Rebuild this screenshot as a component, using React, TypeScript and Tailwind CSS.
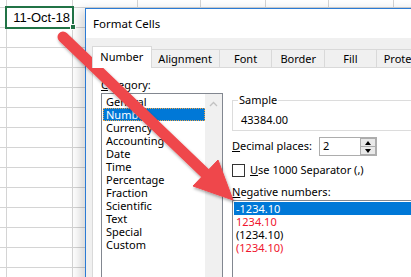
import React from "react";

const COLS = [7, 66, 65, 63, 65, 63, 65, 40];
const ROWS = [8, ...Array.from({ length: 14 }, () => 20)];

const CATEGORIES = [
  "General",
  "Number",
  "Currency",
  "Accounting",
  "Date",
  "Time",
  "Percentage",
  "Fraction",
  "Scientific",
  "Text",
  "Special",
  "Custom",
];

const NEGATIVES = [
  { label: "-1234.10", red: false },
  { label: "1234.10", red: true },
  { label: "(1234.10)", red: false },
  { label: "(1234.10)", red: true },
];

const TABS = [
  { label: "Number", w: "w-[61px]" },
  { label: "Alignment", w: "w-[70px]" },
  { label: "Font", w: "w-[54px]" },
  { label: "Border", w: "w-[54px]" },
  { label: "Fill", w: "w-[53px]" },
  { label: "Protection", w: "w-[70px]" },
];

function Sheet() {
  return (
    <div className="flex flex-col">
      {ROWS.map((h, r) => (
        <div key={r} className="flex" style={{ height: h }}>
          {COLS.map((w, c) => (
            <div
              key={c}
              className="shrink-0 border-r border-b border-[#d4d4d4]"
              style={{ width: w }}
            />
          ))}
        </div>
      ))}
    </div>
  );
}

function Arrow() {
  return (
    <svg
      className="absolute inset-0 pointer-events-none"
      width="411"
      height="277"
      viewBox="0 0 411 277"
    >
      <defs>
        <filter id="sh" x="-20%" y="-20%" width="140%" height="140%">
          <feDropShadow dx="1" dy="2" stdDeviation="1.5" floodColor="#000" floodOpacity="0.35" />
        </filter>
      </defs>
      <g filter="url(#sh)" fill="#ef464b" stroke="#ef464b">
        <line x1="63" y1="37" x2="208" y2="176" strokeWidth="11" strokeLinecap="round" />
        <polygon points="233,200 218,160 193,186" strokeWidth="1" strokeLinejoin="round" />
      </g>
    </svg>
  );
}

export default function App() {
  return (
    <div className="relative w-[411px] h-[277px] overflow-hidden bg-white">
      <Sheet />

      {/* Selected cell */}
      <div className="absolute left-[5px] top-[6px] w-[69px] h-[23px] border-2 border-[#217346] flex items-center justify-end pr-[2px] font-['Liberation_Sans',sans-serif] text-[13px] text-black">
        11-Oct-18
      </div>
      <div className="absolute left-[70px] top-[24px] w-[6px] h-[6px] bg-[#217346] border border-white" />

      {/* Format Cells dialog */}
      <div className="absolute left-[85px] top-[8px] w-[360px] h-[300px] border-l border-t border-[#2b7bd4] bg-[#f0f0f0] shadow-[-5px_2px_10px_rgba(0,0,0,0.16)] font-['Noto_Sans',sans-serif] text-[11px] text-black flex flex-col">
        <div className="h-[29px] bg-white flex items-center pl-[7px] text-[11.5px]">
          Format Cells
        </div>

        <div className="pl-[6px] pt-[8px] flex flex-col">
          {/* Tabs */}
          <div className="flex items-end h-[21px]">
            {TABS.map((t, i) =>
              i === 0 ? (
                <div
                  key={t.label}
                  className={`${t.w} h-[22px] -mb-[1px] bg-white border-l border-t border-r border-[#d9d9d9] flex items-center justify-center relative z-10`}
                >
                  {t.label}
                </div>
              ) : (
                <div
                  key={t.label}
                  className={`${t.w} h-[18px] bg-[#f0f0f0] border-t border-r border-[#d9d9d9] flex items-center justify-center pt-[1px]`}
                >
                  {t.label}
                </div>
              )
            )}
          </div>

          {/* Panel */}
          <div className="h-[240px] bg-white border border-[#d9d9d9] flex gap-[9px] pl-[8px]">
            {/* Category */}
            <div className="flex flex-col pt-[10px]">
              <div className="h-[14px] leading-[14px]">
                <span className="underline">C</span>ategory:
              </div>
              <div className="mt-[1px] w-[122px] h-[200px] border border-[#828790] flex">
                <div className="flex-1 pt-[1px] pl-[1px] flex flex-col">
                  {CATEGORIES.map((c) =>
                    c === "Number" ? (
                      <div
                        key={c}
                        className="h-[13px] leading-[11px] pl-[2px] bg-[#0078d7] text-white border border-dotted border-[#e9a449]"
                      >
                        {c}
                      </div>
                    ) : (
                      <div key={c} className="h-[13px] leading-[13px] pl-[3px]">
                        {c}
                      </div>
                    )
                  )}
                </div>
                <div className="w-[17px] bg-[#f0f0f0] flex justify-center pt-[7px]">
                  <svg width="9" height="6" viewBox="0 0 9 6">
                    <path d="M1 5 L4.5 1.5 L8 5" fill="none" stroke="#c2c2c2" strokeWidth="1.3" />
                  </svg>
                </div>
              </div>
            </div>

            {/* Right column */}
            <div className="flex-1 flex flex-col pt-[26px]">
              <fieldset className="border border-[#dcdcdc] pb-[3px]">
                <legend className="ml-[5px] px-[1px] leading-[12px]">Sample</legend>
                <div className="mt-[7px] pl-[8px] h-[14px] leading-[14px]">43384.00</div>
              </fieldset>

              <div className="mt-[6px] h-[19px] flex items-center">
                <div className="w-[87px]">
                  <span className="underline">D</span>ecimal places:
                </div>
                <div className="w-[58px] h-[19px] border border-[#adadad] bg-white flex items-center">
                  <div className="flex-1 pl-[3px]">2</div>
                  <div className="w-[16px] h-full flex flex-col bg-[#e9e9e9]">
                    <div className="flex-1 border border-[#adadad] flex items-center justify-center">
                      <svg width="6" height="4" viewBox="0 0 6 4">
                        <path d="M0 4 L3 0 L6 4 Z" fill="#000" />
                      </svg>
                    </div>
                    <div className="flex-1 border border-t-0 border-[#adadad] flex items-center justify-center">
                      <svg width="6" height="4" viewBox="0 0 6 4">
                        <path d="M0 0 L3 4 L6 0 Z" fill="#000" />
                      </svg>
                    </div>
                  </div>
                </div>
              </div>

              <div className="mt-[7px] h-[14px] flex items-center gap-[5px]">
                <div className="w-[13px] h-[13px] border border-[#333] bg-white" />
                <div>
                  <span className="underline">U</span>se 1000 Separator (,)
                </div>
              </div>

              <div className="mt-[8px] h-[14px] leading-[14px]">
                <span className="underline">N</span>egative numbers:
              </div>
              <div className="mt-[1px] h-[90px] border border-[#828790] pt-[1px] px-[1px] flex flex-col">
                {NEGATIVES.map((n, i) => (
                  <div
                    key={i}
                    className={`h-[13px] leading-[13px] pl-[2px] ${
                      i === 0 ? "bg-[#0078d7] text-white" : n.red ? "text-[#f0142d]" : ""
                    }`}
                  >
                    {n.label}
                  </div>
                ))}
              </div>
            </div>
          </div>
        </div>
      </div>

      <Arrow />
    </div>
  );
}
